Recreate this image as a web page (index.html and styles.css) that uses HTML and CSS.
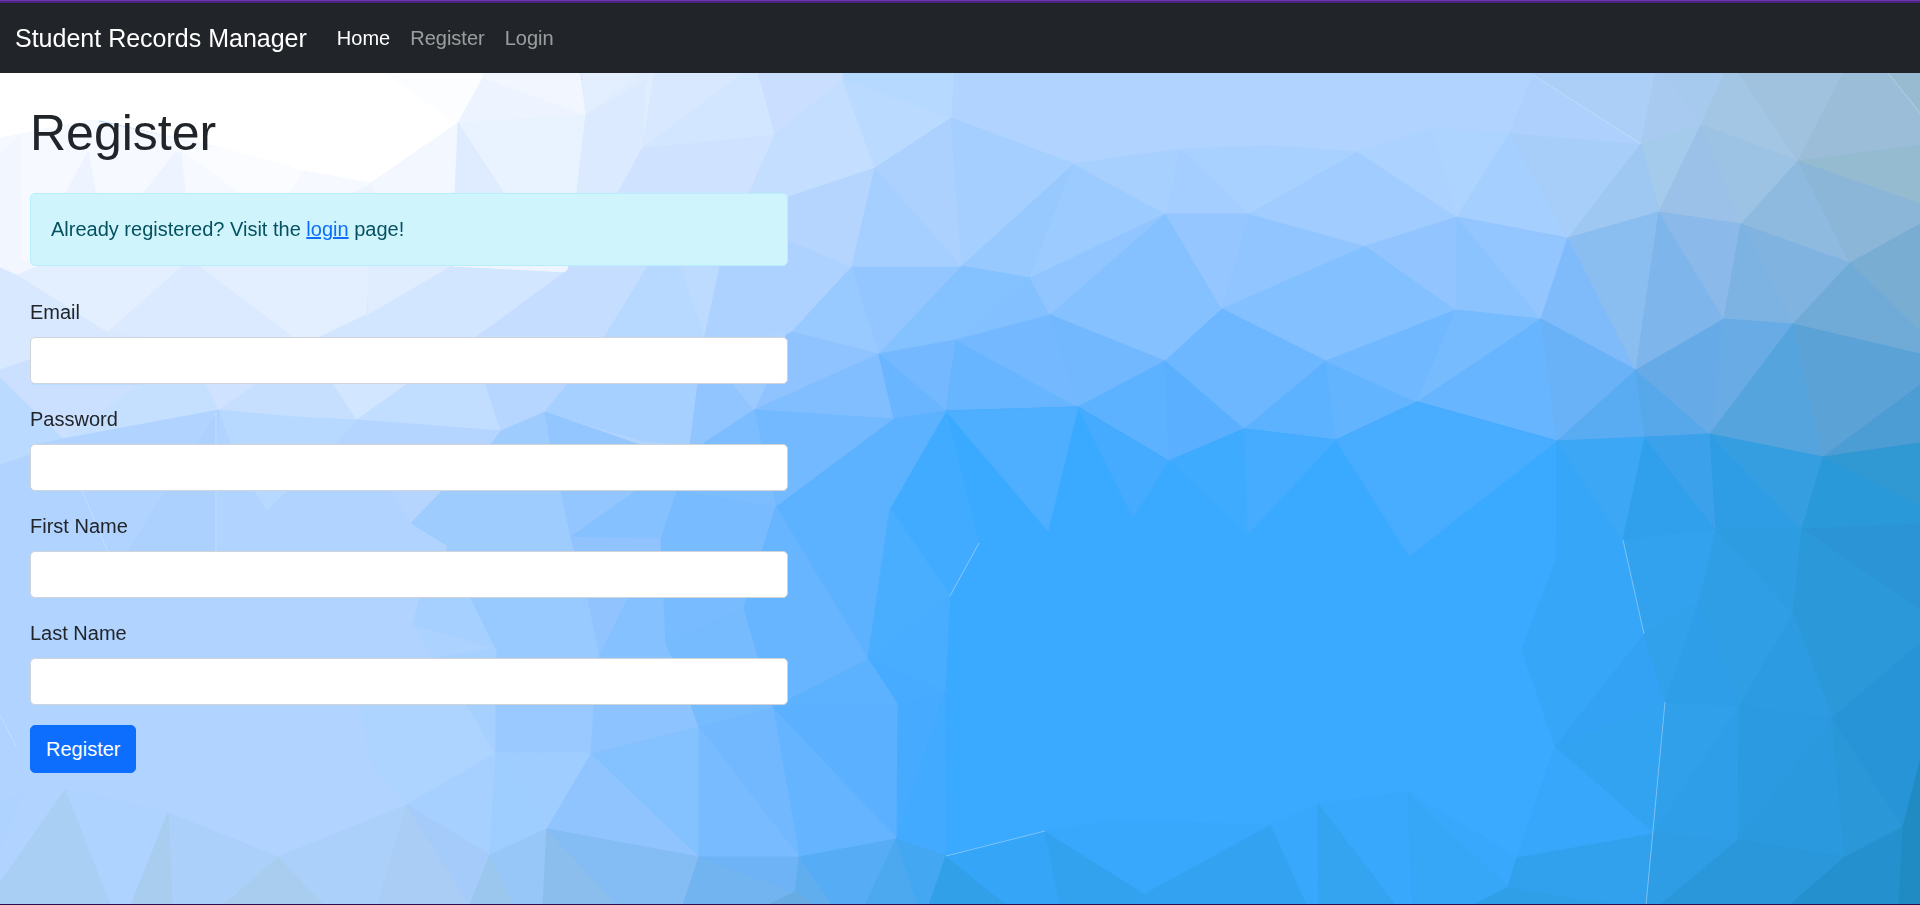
FILE: index.html
```html
<!DOCTYPE html>
<html lang="en">
<head>
<meta charset="utf-8">
<meta name="viewport" content="width=device-width, initial-scale=1">
<title>Register - Student Records Manager</title>
<link rel="stylesheet" href="styles.css">
</head>
<body>
<svg class="backdrop" viewBox="0 0 1920 905" preserveAspectRatio="none" aria-hidden="true">
  <rect width="1920" height="905" fill="#b0d3ff"/>
  <!-- top left: white into pale blue -->
  <g>
    <path color="#fff" d="M0 60H483L458 123 371 183 303 171 218 147 100 120 0 138Z"/>
    <path color="#fcfdff" d="M385 73H483V78L458 123Z"/>
    <path color="#f6f9ff" d="M0 138L20 134 90 120 218 147 303 171 371 183 458 123 455 268H0Z"/>
    <path color="#f1f6ff" d="M0 154L20 134V265L0 268Z"/>
    <path color="#edf4ff" d="M88 152L62 200H97ZM175 153L138 200H186L181 153Z"/>
    <path color="#fafcff" d="M181 150L218 147 303 171 284 200H250Z"/>
    <path color="#eff5ff" d="M371 184L340 200H378Z"/>
    <path color="#f3f7ff" d="M458 123L371 183 378 200H455Z"/>
    <path color="#edf4ff" d="M483 78L586 115 458 123Z"/>
    <path color="#f1f6ff" d="M483 73H580L586 115 483 78Z"/>
    <path color="#e3efff" d="M580 60H657V73L640 85 586 115Z"/>
    <path color="#e0edff" d="M586 115L657 60 642 149 614 200H576Z"/>
    <path color="#e9f3ff" d="M458 123L586 115 576 200H508Z"/>
    <path color="#dfecff" d="M458 123L508 200H455Z"/>
    <path color="#d7e8ff" d="M657 60H745V73L642 149Z"/>
    <path color="#dbeaff" d="M586 115L646 80 642 149 614 200H576Z"/>
    <path color="#d2e6ff" d="M743 73L745 60H756L775 135 642 149Z"/>
    <path color="#cfe2ff" d="M642 149L775 135 746 200H614Z"/>
    <path color="#cadfff" d="M755 60H843V80L775 135Z"/>
    <path color="#c3deff" d="M775 135L843 80 875 168 788 197 746 200Z"/>
    <path color="#b6daff" d="M843 60H954L951 118 843 80Z"/>
    <path color="#badaff" d="M843 80L951 118 875 168Z"/>
  </g>
  <!-- band around the notice and the first field -->
  <g>
    <path color="#d8e8ff" d="M0 268L18 275 41 266H569V345L32 359 0 371Z"/>
    <path color="#f1f6ff" d="M0 262H45L18 275 0 267Z"/>
    <path color="#e3efff" d="M41 266H183L108 332 18 275Z"/>
    <path color="#dbeaff" d="M183 266H200L294 337H150L108 332Z"/>
    <path color="#e3efff" d="M200 266H369L366 315 320 337H294Z"/>
    <path color="#d3e6ff" d="M366 315L470 337H320Z"/>
    <path color="#e0edff" d="M369 266H450L368 315Z"/>
    <path color="#d3e6ff" d="M453 266L568 270 477 337H470L368 315Z"/>
    <path color="#eff5ff" d="M453 266H570L568 272Z"/>
    <path color="#c5ddff" d="M568 270L570 262H650L604 338H475Z"/>
    <path color="#b7d9ff" d="M648 266H680L704 338H604Z"/>
    <path color="#bcdbff" d="M680 266H720L705 338Z"/>
    <path color="#aed2ff" d="M720 266L746 200 788 240 852 267 792 332 704 340Z"/>
    <path color="#cbe0ff" d="M0 370L32 359V385H145L63 439 0 378Z"/>
    <path color="#bbdaff" d="M0 378L63 439 55 446 0 464Z"/>
    <path color="#c5dfff" d="M145 382H210L219 410 63 439Z"/>
    <path color="#cfe2ff" d="M205 382H260L219 410Z"/>
    <path color="#c7dfff" d="M260 382H334L357 420 294 417 219 410Z"/>
    <path color="#d2e6ff" d="M332 382H410L357 420Z"/>
    <path color="#c1ddff" d="M410 382H485L501 431 357 420Z"/>
    <path color="#b7d6ff" d="M485 382H570L545 412 501 431Z"/>
    <path color="#b1d3ff" d="M63 439L219 410 235 446H30Z"/>
    <path color="#b8d9ff" d="M219 410L294 417 357 420 335 446H232Z"/>
    <path color="#b3d5ff" d="M357 420L501 431 492 446H335Z"/>
  </g>
  <!-- left field of the form, lower rows -->
  <g>
    <path color="#add1ff" d="M219 410L197 446H216ZM165 491L128 552H216V491Z"/>
    <path color="#b7d9ff" d="M255 491H286L267 510Z"/>
    <path color="#b5d5ff" d="M392 491H442L411 523Z"/>
    <path color="#9eccff" d="M442 491L492 443 501 431 545 412 551 446 562 491 571 537 590 600 470 600 446 552 448 546 411 523Z"/>
    <path color="#a6d0ff" d="M545 412L569 382 640 380 700 383 692 446 640 440Z"/>
    <path color="#93c6ff" d="M545 412L640 445 640 491 571 537 551 446Z"/>
    <path color="#85c0ff" d="M571 537L640 488 677 491 661 539Z"/>
    <path color="#91c3ff" d="M571 537L661 539 664 600 640 655 599 655 575 552Z"/>
    <path color="#a5d0ff" d="M420 598L413 625 496 649 471 598Z"/>
    <path color="#acd2ff" d="M413 625L496 649V658H433Z"/>
    <path color="#98c9ff" d="M471 598H587L599 657H496V649Z"/>
    <path color="#86c1ff" d="M599 657L628 598H664L670 658Z"/>
    <path color="#add3ff" d="M362 706H467L496 753 407 805 370 761Z"/>
    <path color="#a5d0ff" d="M467 706L433 658 496 649V753Z"/>
    <path color="#99c9ff" d="M496 657L599 655 594 706 591 754 496 753Z"/>
    <path color="#a0cdff" d="M496 753H591L547 829Z"/>
    <path color="#a6d0ff" d="M407 805L496 753 490 855Z"/>
    <path color="#9ecdff" d="M496 753L547 829 490 855Z"/>
    <path color="#8dc4ff" d="M594 706L599 657H666L699 727 591 754Z"/>
    <path color="#84c1ff" d="M591 754L699 727V857Z"/>
    <path color="#90c4ff" d="M591 754L640 802 699 857 640 846 547 829Z"/>
    <path color="#abd0f9" d="M65 790L168 813 278 857 407 805 490 855V905H0V883Z"/>
    <path color="#aed3fe" d="M0 803L22 792 0 850ZM65 790L168 813 131 905H110Z"/>
    <path color="#aacff5" d="M65 790L0 883V905H110Z"/>
    <path color="#a8cdef" d="M168 813L131 905H172ZM278 857L224 905H323Z"/>
    <path color="#a9cdf5" d="M407 805L378 905H471Z"/>
    <path color="#a4cbf9" d="M407 805L490 855 470 905Z"/>
    <path color="#9bc7ef" d="M490 855L470 905H518Z"/>
    <path color="#97c6f8" d="M490 855L547 829 543 905H515Z"/>
    <path color="#8bbded" d="M547 829L543 905H617Z"/>
    <path color="#84bcf4" d="M547 829L699 857 683 905H617Z"/>
  </g>
  <!-- upper middle -->
  <g>
    <path color="#b5d5ff" d="M788 197L875 168 852 267 788 240Z"/>
    <path color="#a5cfff" d="M875 168L962 266H852Z"/>
    <path color="#acd1ff" d="M875 168L951 118 962 266Z"/>
    <path color="#a4cfff" d="M951 118L1074 164 962 266Z"/>
    <path color="#97c9ff" d="M1074 164L962 266 1030 278Z"/>
    <path color="#9ccbff" d="M1074 164L1166 214 1030 278Z"/>
    <path color="#a8d0ff" d="M1074 164L1181 149 1166 214Z"/>
    <path color="#a4ceff" d="M1181 149L1250 214H1166Z"/>
    <path color="#a8d1ff" d="M1181 149L1270 146 1358 152 1250 214Z"/>
    <path color="#93c6ff" d="M852 267H962L879 354 792 332Z"/>
    <path color="#99caff" d="M852 267L861 300 879 354 792 332Z"/>
    <path color="#84c1ff" d="M962 266L1030 278 956 340 879 354Z"/>
    <path color="#83c0ff" d="M1030 278L1050 315 956 340Z"/>
    <path color="#90c5ff" d="M1030 278L1166 214 1050 315Z"/>
    <path color="#86c1ff" d="M1166 214L1222 309 1165 361 1050 315Z"/>
    <path color="#95c6ff" d="M1166 214H1250L1222 309Z"/>
    <path color="#91c5ff" d="M1250 214L1366 246 1222 309Z"/>
    <path color="#a0ccff" d="M1250 214L1358 152 1457 217 1366 246Z"/>
    <path color="#acd2ff" d="M1358 152L1432 129 1457 217Z"/>
    <path color="#add3ff" d="M1432 129L1510 133 1457 217Z"/>
    <path color="#a4cfff" d="M1510 133L1568 238 1457 217Z"/>
    <path color="#83c0ff" d="M1222 309L1366 246 1456 310 1326 361Z"/>
    <path color="#92c5ff" d="M1366 246L1457 217 1456 310Z"/>
    <path color="#8bc3ff" d="M1457 217L1541 319 1456 310Z"/>
    <path color="#93c5ff" d="M1457 217L1568 238 1541 319Z"/>
  </g>
  <!-- upper right -->
  <g>
    <path color="#a7cdf9" d="M1510 133L1641 144 1568 238Z"/>
    <path color="#add0fc" d="M1533 75L1641 144 1510 133Z"/>
    <path color="#abcff7" d="M1533 60H1658L1641 144 1533 75Z"/>
    <path color="#a8caf0" d="M1658 60L1701 125 1641 144Z"/>
    <path color="#a5caee" d="M1656 60H1730L1701 125Z"/>
    <path color="#a2c6e4" d="M1725 73L1728 60H1740L1798 161 1701 125Z"/>
    <path color="#a0c2df" d="M1730 60H1850L1798 161Z"/>
    <path color="#9bbdd8" d="M1850 60H1920V145L1798 161Z"/>
    <path color="#98bbd2" d="M1888 73V60H1920V113Z"/>
    <path color="#95bbd1" d="M1798 161L1920 145V204Z"/>
    <path color="#a4caec" d="M1641 144L1701 125 1659 212Z"/>
    <path color="#9ec8f2" d="M1641 144L1659 212 1568 238Z"/>
    <path color="#9bc1e9" d="M1701 125L1741 224 1659 212Z"/>
    <path color="#9cc3e4" d="M1701 125L1798 161 1741 224Z"/>
    <path color="#8fbadf" d="M1798 161L1850 263 1741 224Z"/>
    <path color="#8bb6d8" d="M1798 161L1920 204V224L1850 263Z"/>
    <path color="#7fbafa" d="M1568 238L1636 370 1541 319Z"/>
    <path color="#8abdf0" d="M1568 238L1659 212 1636 370Z"/>
    <path color="#7eb5eb" d="M1659 212L1724 319 1636 370Z"/>
    <path color="#8ab9ea" d="M1659 212L1741 224 1724 319Z"/>
    <path color="#80b3e0" d="M1741 224L1850 263 1793 324 1724 319Z"/>
    <path color="#7db3e3" d="M1741 224L1793 324 1724 319Z"/>
    <path color="#70abd8" d="M1850 263L1920 354 1793 324Z"/>
    <path color="#79add2" d="M1850 263L1920 224V331Z"/>
    <path color="#70abd8" d="M1850 263L1920 331V354Z"/>
  </g>
  <!-- middle band -->
  <g>
    <path color="#8fc3ff" d="M786 335L792 332 879 354 754 410 700 383 780 383Z"/>
    <path color="#91c5ff" d="M698 383H732L754 410 704 446H690Z"/>
    <path color="#9ccaff" d="M732 383H767L754 410Z"/>
    <path color="#80beff" d="M879 354L894 419 754 410Z"/>
    <path color="#74b9ff" d="M879 354L956 340 946 411 894 419Z"/>
    <path color="#6ab5ff" d="M879 354L946 411 894 419Z"/>
    <path color="#67b4ff" d="M956 340L1078 407 946 411Z"/>
    <path color="#74b9ff" d="M956 340L1050 315 1078 407Z"/>
    <path color="#72b8ff" d="M1050 315L1165 361 1078 407Z"/>
    <path color="#6cb7ff" d="M1165 361L1222 309 1326 361 1244 429Z"/>
    <path color="#5db2ff" d="M1165 361L1169 461 1078 407Z"/>
    <path color="#5aafff" d="M1165 361L1244 429 1169 461Z"/>
    <path color="#5db2ff" d="M1326 361L1336 440 1244 429Z"/>
    <path color="#62b4ff" d="M1326 361L1417 402 1336 440Z"/>
    <path color="#70b8ff" d="M1326 361L1456 310 1417 402Z"/>
    <path color="#77bbff" d="M1456 310L1541 319 1417 402Z"/>
    <path color="#67b4ff" d="M1541 319L1557 441 1417 402Z"/>
    <path color="#69b2f8" d="M1541 319L1636 370 1557 441Z"/>
    <path color="#59abf2" d="M1636 370L1645 437 1557 441Z"/>
    <path color="#56a8ea" d="M1636 370L1710 434 1645 437Z"/>
    <path color="#67aae8" d="M1636 370L1724 319 1713 434H1710Z"/>
    <path color="#69abe4" d="M1724 319L1793 324 1712 434Z"/>
    <path color="#55a4de" d="M1793 324L1823 457 1710 434Z"/>
    <path color="#5ba2d6" d="M1793 324L1920 354V385L1823 457Z"/>
    <path color="#4b9dd3" d="M1823 457L1920 385V443Z"/>
  </g>
  <!-- blue centre -->
  <g>
    <path color="#39aaff" d="M946 411L1078 407 1169 461 1244 429 1336 440 1417 402 1557 441 1600 650 1517 905H946L890 508Z"/>
    <path color="#41abff" d="M946 411L979 543 950 596 890 508Z"/>
    <path color="#4eaeff" d="M946 411L1078 407 1048 531Z"/>
    <path color="#45abff" d="M1078 407L1169 461 1133 517Z"/>
    <path color="#3eabff" d="M1169 461L1244 429 1248 534Z"/>
    <path color="#45acff" d="M1244 429L1336 440 1248 534Z"/>
    <path color="#48acff" d="M1336 440L1417 402 1557 441 1409 556Z"/>
    <path color="#72b9ff" d="M754 410L894 419 776 507Z"/>
    <path color="#7cbdff" d="M754 410L776 507 677 491 704 443Z"/>
    <path color="#78bbff" d="M677 491L776 507 744 608 661 539Z"/>
    <path color="#5cb2ff" d="M894 419L946 411 890 508 868 659 776 507Z"/>
    <path color="#67b4ff" d="M776 507L868 659 744 608Z"/>
    <path color="#4aaeff" d="M890 508L950 596 868 659Z"/>
    <path color="#78bbff" d="M661 539L744 608 666 643Z"/>
    <path color="#77bbff" d="M666 643L744 608 773 708 699 727Z"/>
    <path color="#68b5ff" d="M744 608L868 659 773 708Z"/>
    <path color="#48acff" d="M868 659L950 596 945 692Z"/>
    <path color="#47acff" d="M868 659L945 692 898 705Z"/>
    <path color="#5db2ff" d="M868 659L898 705 773 708Z"/>
    <path color="#5bb0ff" d="M773 708L898 705 897 839Z"/>
    <path color="#64b4ff" d="M773 708L897 839 799 857Z"/>
    <path color="#71b8ff" d="M699 727L773 708 799 857Z"/>
    <path color="#78bbff" d="M699 727L799 857H699Z"/>
    <path color="#46abff" d="M898 705L945 692 897 839Z"/>
    <path color="#42aaff" d="M945 692L946 856 897 839Z"/>
  </g>
  <!-- lower middle -->
  <g>
    <path color="#71b4f0" d="M699 857L795 892 772 905H683Z"/>
    <path color="#6eb3f6" d="M699 857H799L795 892Z"/>
    <path color="#61aeef" d="M799 857L832 905H795V892Z"/>
    <path color="#67ace2" d="M795 892L815 905H768Z"/>
    <path color="#56adf6" d="M799 857L896 839 865 905H832Z"/>
    <path color="#4ca9ef" d="M896 839L918 905H865Z"/>
    <path color="#43a7f2" d="M896 839L946 856 929 905H918Z"/>
    <path color="#31a0e9" d="M946 856L1007 905H929Z"/>
    <path color="#35a5f7" d="M946 856L1045 831 1060 905H1007Z"/>
    <path color="#32a2ef" d="M1045 831L1145 894V905H1060Z"/>
    <path color="#38a8fc" d="M1045 831L1115 820 1271 825 1145 894Z"/>
    <path color="#33a3f1" d="M1271 825L1307 905H1135L1145 894Z"/>
    <path color="#37a8fb" d="M1271 825L1318 804V905H1307ZM1318 804L1408 792 1413 905H1395Z"/>
    <path color="#34a4f1" d="M1318 804L1395 905H1319Z"/>
    <path color="#36a6f7" d="M1408 792L1508 887 1474 905H1413Z"/>
    <path color="#38a8fd" d="M1408 792L1517 857 1508 887Z"/>
    <path color="#2f9fe8" d="M1508 887L1620 905H1474Z"/>
    <path color="#31a1ed" d="M1517 857L1653 833 1646 905H1620L1508 887Z"/>
  </g>
  <!-- lower right -->
  <g>
    <path color="#36a6f8" d="M1557 441L1623 540 1556 560Z"/>
    <path color="#3ca7f5" d="M1557 441L1645 437 1623 540Z"/>
    <path color="#31a0ec" d="M1645 437L1716 530 1623 540Z"/>
    <path color="#3ca1eb" d="M1645 437L1710 434 1716 530Z"/>
    <path color="#2e9de5" d="M1710 434L1802 529 1716 530Z"/>
    <path color="#359ee0" d="M1710 434L1823 457 1802 529Z"/>
    <path color="#2a99da" d="M1823 457L1920 505V524L1802 529Z"/>
    <path color="#3098d3" d="M1823 457L1920 443V505Z"/>
    <path color="#36a6f8" d="M1556 560L1623 540 1644 634 1555 747 1522 649Z"/>
    <path color="#33a2f5" d="M1644 634L1665 702 1555 747Z"/>
    <path color="#32a3f1" d="M1665 702L1653 833 1555 747Z"/>
    <path color="#36a7fb" d="M1555 747L1653 833 1517 857Z"/>
    <path color="#32a2ee" d="M1623 540L1716 530 1700 600 1644 634Z"/>
    <path color="#30a1ea" d="M1644 634L1700 600 1665 702Z"/>
    <path color="#2f9ee4" d="M1716 530L1793 614 1739 706 1700 600Z"/>
    <path color="#2d9ce1" d="M1716 530L1802 529 1793 614Z"/>
    <path color="#2b94d6" d="M1802 529L1920 524V610Z"/>
    <path color="#2a98d9" d="M1802 529L1920 610V643L1832 718 1793 614Z"/>
    <path color="#2d9be2" d="M1793 614L1832 718 1739 706Z"/>
    <path color="#30a0eb" d="M1665 702L1739 706 1653 833Z"/>
    <path color="#2f9ee8" d="M1700 600L1739 706 1665 702ZM1739 706L1738 840 1653 833Z"/>
    <path color="#2c9ae0" d="M1739 706L1832 718 1738 840Z"/>
    <path color="#2b99de" d="M1832 718L1845 857 1738 840Z"/>
    <path color="#2997d8" d="M1832 718L1903 827 1845 857Z"/>
    <path color="#2894d8" d="M1832 718L1920 643V761L1903 827Z"/>
    <path color="#2f9de6" d="M1653 833L1738 840 1660 905H1646Z"/>
    <path color="#2997da" d="M1738 840L1845 857 1795 905H1660Z"/>
    <path color="#2490ce" d="M1845 857L1903 827 1899 905H1790Z"/>
    <path color="#208bc3" d="M1903 827L1920 761V905H1899Z"/>
  </g>
  <!-- light seams between facets -->
  <g class="seams">
    <path d="M1533 75L1641 144M1888 73L1920 113M979 543L950 596M946 856L1045 831M1623 540L1644 634M1665 702L1646 905"/>
    <path d="M216 412V552M82 491L108 552M0 715L16 746"/>
  </g>
</svg>

<header class="site-header">
  <nav class="navbar" aria-label="Main">
    <a class="brand" href="#">Student Records Manager</a>
    <ul class="nav-list">
      <li><a class="nav-link active" href="#" aria-current="page">Home</a></li>
      <li><a class="nav-link" href="#">Register</a></li>
      <li><a class="nav-link" href="#">Login</a></li>
    </ul>
  </nav>
</header>

<main class="content">
  <h1>Register</h1>
  <p class="notice">Already registered? Visit the <a href="#">login</a> page!</p>
  <form class="form">
    <div class="field">
      <label for="email">Email</label>
      <input id="email" name="email" type="email">
    </div>
    <div class="field">
      <label for="password">Password</label>
      <input id="password" name="password" type="password">
    </div>
    <div class="field">
      <label for="first-name">First Name</label>
      <input id="first-name" name="first_name" type="text">
    </div>
    <div class="field">
      <label for="last-name">Last Name</label>
      <input id="last-name" name="last_name" type="text">
    </div>
    <button class="submit" type="submit">Register</button>
  </form>
</main>
<footer class="edge"></footer>
</body>
</html>
```
FILE: styles.css
```css
*,
*::before,
*::after {
  box-sizing: border-box;
}

body {
  margin: 0;
  min-height: 100vh;
  display: flex;
  flex-direction: column;
  font-family: "Liberation Sans", Arial, sans-serif;
  font-size: 20px;
  line-height: 30px;
  color: #212529;
}

.backdrop {
  position: fixed;
  top: 0;
  left: 0;
  z-index: -1;
  width: 100%;
  height: 100%;
}

.backdrop path {
  fill: currentColor;
  stroke: currentColor;
  stroke-width: 1;
  stroke-linejoin: round;
}

.backdrop .seams path {
  fill: none;
  stroke: #d8ecff;
  stroke-opacity: 0.45;
}

.site-header {
  padding-top: 3px;
  background: linear-gradient(#6a35a8 1px, #4b2380 1px, #4b2380 3px, #212529 3px);
}

.navbar {
  display: flex;
  align-items: center;
  padding: 10px 15px;
}

.brand {
  margin-right: 20px;
  padding: 6px 0;
  font-size: 25px;
  line-height: 38px;
  color: #fff;
  text-decoration: none;
}

.nav-list {
  display: flex;
  margin: 0;
  padding: 0;
  list-style: none;
}

.nav-link {
  display: block;
  padding: 10px;
  color: rgba(255, 255, 255, 0.55);
  text-decoration: none;
}

.nav-link.active {
  color: #fff;
}

.content {
  flex: 1;
  width: 42%;
  min-width: 320px;
  padding: 30px 18px 30px 30px;
}

h1 {
  margin: 0 0 30px;
  font-size: 50px;
  font-weight: 400;
  line-height: 60px;
}

.notice {
  margin: 0 0 31px;
  padding: 20px;
  border: 1px solid #b6effb;
  border-radius: 5px;
  background: #cff4fc;
  line-height: 31px;
  color: #055160;
}

.notice a {
  color: #0d6efd;
}

.form {
  display: flex;
  flex-direction: column;
  align-items: flex-start;
  gap: 20px;
}

.field {
  display: flex;
  flex-direction: column;
  gap: 10px;
  width: 100%;
}

.field input {
  width: 100%;
  height: 47px;
  padding: 8px 15px;
  border: 1px solid #ced4da;
  border-radius: 5px;
  background: #fff;
  font: inherit;
  color: inherit;
}

.submit {
  padding: 8px 15px;
  border: 1px solid #0d6efd;
  border-radius: 5px;
  background: #0d6efd;
  font: inherit;
  color: #fff;
  cursor: pointer;
}

.edge {
  height: 1px;
  background: #2c0d4d;
}
```
